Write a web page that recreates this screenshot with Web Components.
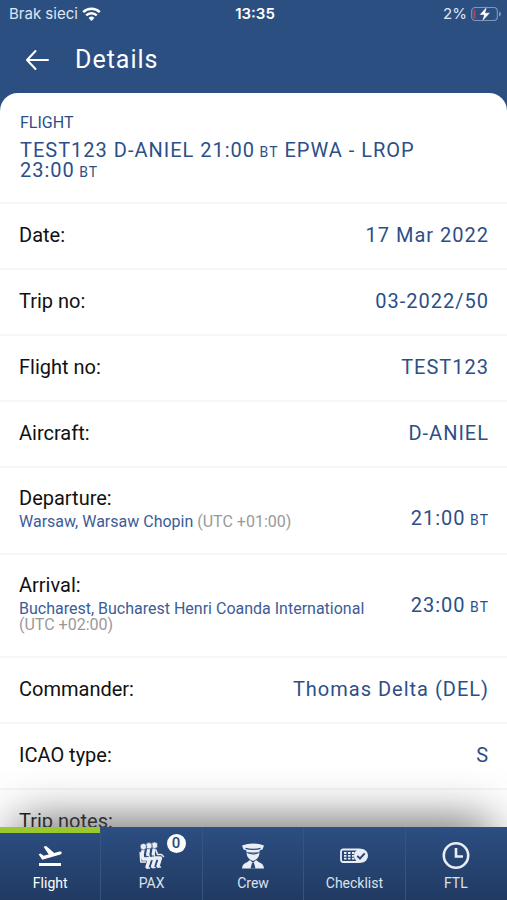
<!DOCTYPE html>
<html lang="en">
<head>
<meta charset="utf-8">
<meta name="viewport" content="width=device-width, initial-scale=1">
<title>Flight details</title>
<style>
  html, body { margin: 0; height: 100%; }
  body { font-family: Roboto, "Noto Sans", sans-serif; background: #2c4f82; overflow: hidden; }
</style>
</head>
<body>
<flight-app></flight-app>

<script>
const define = (name, html) => {
  const template = document.createElement('template');
  template.innerHTML = html;
  customElements.define(name, class extends HTMLElement {
    constructor() {
      super();
      this.attachShadow({ mode: 'open' }).append(template.content.cloneNode(true));
    }
  });
};

define('status-bar', `
  <style>
    :host { display: grid; grid-template-columns: 1fr auto 1fr; align-items: center; height: 28px;
      padding: 0 6px 0 9px; color: #dfe7f2; font: 15px/20px Inter, "Liberation Sans", sans-serif; }
    .left, .right { display: flex; align-items: center; gap: 4px; }
    .right { justify-content: flex-end; }
    .time { font-weight: 600; color: #fff; }
    svg { display: block; }
  </style>
  <div class="left"><span>Brak sieci</span>
    <svg width="19" height="14" viewBox="0 0 19 14" fill="none" stroke="#fff" stroke-width="2.4" aria-label="Wi-Fi">
      <path d="M1.2 5.2a11.8 11.8 0 0 1 16.6 0"/><path d="M4.2 8.4a7.5 7.5 0 0 1 10.6 0"/>
      <path d="M9.5 14 6.6 10.9a4.2 4.2 0 0 1 5.8 0Z" fill="#fff" stroke="none"/>
    </svg>
  </div>
  <div class="time">13:35</div>
  <div class="right"><span>2%</span>
    <svg width="30" height="16" viewBox="0 0 30 16" aria-label="Battery charging">
      <rect x=".7" y="1.5" width="25.6" height="13" rx="3.5" fill="none" stroke="#8298b9" stroke-width="1.1"/>
      <path d="M28 5.5v5q2-.8 2-2.5t-2-2.5Z" fill="#8298b9"/>
      <path d="M4.5 3.5v9H4q-1.500 0-1.500-1.500V5q0-1.500 1.500-1.500Z" fill="#b0465a"/>
      <path d="M16.300 0 8.300 9h4.600L10.800 16l8.500-9.200h-4.900Z" fill="#fff" stroke="#2c4f82" stroke-width=".5"/>
    </svg>
  </div>`);

define('app-header', `
  <style>
    :host { display: flex; align-items: center; gap: 25px; height: 65px; padding: 0 24px 1px; box-sizing: border-box; color: #fff; }
    button { display: block; padding: 0; border: 0; background: none; color: inherit; }
    svg { display: block; }
    h1 { margin: 0; font-size: 25px; line-height: 30px; font-weight: 400; letter-spacing: 1px; }
  </style>
  <button type="button" aria-label="Back">
    <svg width="26" height="24" viewBox="0 0 26 24" fill="none" stroke="#fff" stroke-width="2" stroke-linecap="round" stroke-linejoin="round"><path d="M24 12H3M11.500 3 3 12l8.500 9"/></svg>
  </button>
  <h1><slot></slot></h1>`);

define('time-unit', `
  <style>:host { font-size: 14px; line-height: 14px; }</style><slot></slot>`);

define('flight-summary', `
  <style>
    :host { display: block; padding: 20px 20px 22px; border-bottom: 2px solid #f6f6f7; color: #2c4f88; }
    .kicker { font-size: 16px; line-height: 20px; margin-bottom: 7px; }
    h2 { margin: 0; max-width: 420px; font-size: 20px; line-height: 20px; font-weight: 400; letter-spacing: 1px; }
  </style>
  <div class="kicker"><slot name="kicker"></slot></div>
  <h2><slot></slot></h2>`);

define('detail-row', `
  <style>
    :host { display: flex; justify-content: space-between; gap: 20px; padding: 20px 18px 22px 19px;
      border-bottom: 2px solid #f6f6f7; font-size: 20px; line-height: 22px; }
    :host([place]) { padding-top: 19px; padding-bottom: 23px; }
    .label { color: #111; }
    .note { color: #999; font-size: 16px; line-height: 16px; }
    :host([place]) .note { margin-top: 5px; }
    .value { flex: none; color: #2c4f88; letter-spacing: 1px; }
    :host([place]) .value { padding-top: 20px; }
    ::slotted(span[slot=place]) { color: #3c5c98; }
  </style>
  <div><div class="label"><slot name="label"></slot></div>
    <div class="note"><slot name="place"></slot> <slot name="zone"></slot></div></div>
  <div class="value"><slot></slot></div>`);

define('tab-item', `
  <style>
    :host { display: block; flex: 1 1 0; min-width: 0; border-right: 1px solid #35547f; box-sizing: border-box; }
    :host(:last-child) { border-right-color: transparent; }
    button { position: relative; display: flex; flex-direction: column; align-items: center; gap: 2px; width: 100%; height: 73px;
      padding: 14px 0 0; border: 0; background: none; color: #dbe2ed; font: 14px/20px Roboto, sans-serif; box-sizing: border-box; }
    :host([active]) button { color: #fff; box-shadow: inset 0 6px #9bc82f; }
    ::slotted(svg) { display: block; width: 32px; height: 30px; }
    ::slotted(b) { position: absolute; top: 7px; left: calc(50% + 15px); width: 19px; height: 19px; border-radius: 50%;
      background: #fff; color: #2c4a78; font: 500 15px/19px Roboto, sans-serif; text-align: center; }
  </style>
  <button type="button"><slot name="icon"></slot><span><slot></slot></span><slot name="badge"></slot></button>`);

define('tab-bar', `
  <style>
    :host { display: block; position: relative; background: linear-gradient(#2c4e82, #213a62);
      box-shadow: 0 -20px 48px -16px #555; }
    nav { display: flex; }
  </style>
  <nav aria-label="Sections"><slot></slot></nav>`);

define('flight-app', `
  <style>
    :host { display: flex; flex-direction: column; height: 100vh; }
    main { flex: 1; min-height: 0; overflow: hidden; background: #fff; border-radius: 18px 18px 0 0; }
  </style>
  <status-bar></status-bar>
  <app-header>Details</app-header>
  <main>
    <flight-summary><span slot="kicker">FLIGHT</span>TEST123 D-ANIEL 21:00<time-unit> BT</time-unit> EPWA - LROP 23:00<time-unit> BT</time-unit></flight-summary>
    <detail-row><span slot="label">Date:</span>17 Mar 2022</detail-row>
    <detail-row><span slot="label">Trip no:</span>03-2022/50</detail-row>
    <detail-row><span slot="label">Flight no:</span>TEST123</detail-row>
    <detail-row><span slot="label">Aircraft:</span>D-ANIEL</detail-row>
    <detail-row place><span slot="label">Departure:</span><span slot="place">Warsaw, Warsaw Chopin</span><span slot="zone">(UTC +01:00)</span>21:00<time-unit> BT</time-unit></detail-row>
    <detail-row place><span slot="label">Arrival:</span><span slot="place">Bucharest, Bucharest Henri Coanda International</span><span slot="zone">(UTC +02:00)</span>23:00<time-unit> BT</time-unit></detail-row>
    <detail-row><span slot="label">Commander:</span>Thomas Delta (DEL)</detail-row>
    <detail-row><span slot="label">ICAO type:</span>S</detail-row>
    <detail-row><span slot="label">Trip notes:</span></detail-row>
  </main>
  <tab-bar>
    <tab-item active>
      <svg slot="icon" viewBox="0 0 32 30" fill="#fff"><path d="M5 22h22v3H5zM4.600 13.200l2-.6 3 2.200 5.100-1.400L9.600 5.800l2.600-.7 8 6.800 5.300-1.400q1.700-.4 2.200 1 .2 1.500-1.300 2L8.200 18.700Z"/></svg>Flight
    </tab-item>
    <tab-item>
      <svg slot="icon" viewBox="0 0 32 30">
        <g fill="none" stroke="#e9edf4" stroke-linecap="round" stroke-linejoin="round">
          <g stroke-width="3.400"><path d="M18 8.500q-1.500 4 0 8.500h6.500l-2.500 8"/><path d="M12.500 9q-1.500 4 0 8.500h6.500l-2.500 8"/><path d="M7 9.500q-1.500 4 0 8.500h6.500l-2.500 8"/></g>
          <g stroke="#29487a" stroke-width=".9"><path d="M20.300 9.500v5h3M14.800 10v5h3M9.300 10.500v5h3M16 20l-2 5M21.500 19.500l-2 5"/></g>
          <g stroke-width="1.500"><path d="M4.200 11.500 4.800 21h5M20 9l1.500 4.500h4l2 2M11 27h2.500M16.500 26.500h2.500M22 26h2.500"/></g>
          <g fill="#e9edf4" stroke="#29487a" stroke-width=".6"><circle cx="18.600" cy="4.300" r="3.200"/><circle cx="13" cy="4.800" r="3.200"/><circle cx="7.400" cy="5.600" r="3.200"/></g>
        </g>
      </svg>PAX<b slot="badge">0</b>
    </tab-item>
    <tab-item>
      <svg slot="icon" viewBox="0 0 32 30" fill="#e9edf4">
        <path d="M5 4.500Q16 .5 27 4.500L25.500 8.500 22.500 9.500v2H9.500v-2L6.500 8.500Z"/>
        <path d="M9.500 12q.5 6 6.500 8 6-2 6.500-8Z"/>
        <path d="M5 27.500q.3-4.800 5-6.300l3-2.200 3 3 3-3 3 2.200q4.700 1.500 5 6.300Z"/>
        <path d="M8.500 7.300q7.500 2 15 0M10.500 11.800q5.500 2.200 11 0" fill="none" stroke="#29487a" stroke-width="1.200"/>
        <path d="M15 22h2l1.500 5.500h-5Z" fill="#29487a"/>
      </svg>Crew
    </tab-item>
    <tab-item>
      <svg slot="icon" viewBox="0 0 32 30">
        <rect x="3" y="8.500" width="20" height="12.500" rx="2" fill="none" stroke="#e9edf4" stroke-width="1.800"/>
        <path d="M6 12h2.500M10 12h2.500M14 12h2.500M6 14.800h2.500M10 14.800h2.500M14 14.800h2.500M6 17.600h2.500M10 17.600h2.500M14 17.600h2.500" stroke="#e9edf4" stroke-width="1.800"/>
        <circle cx="23" cy="14.800" r="7" fill="#e9edf4"/>
        <path d="m19.300 14.800 2.700 2.700 4.700-5.200" fill="none" stroke="#29487a" stroke-width="1.900"/>
      </svg>Checklist
    </tab-item>
    <tab-item>
      <svg slot="icon" viewBox="0 0 32 30" fill="none" stroke="#e9edf4"><circle cx="16" cy="14.500" r="12.200" stroke-width="2.600"/><path d="M16 7v8.500h7" stroke-width="2.600"/></svg>FTL
    </tab-item>
  </tab-bar>`);
</script>
</body>
</html>
